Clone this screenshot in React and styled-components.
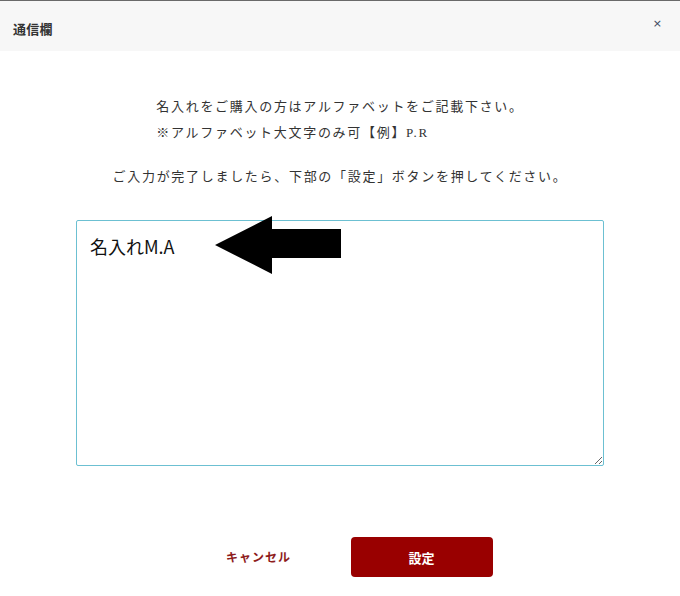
import React from 'react';
import styled, { createGlobalStyle } from 'styled-components';

const GlobalStyle = createGlobalStyle`
    html, body {
        margin: 0;
        padding: 0;
        background: #ffffff;
    }
    body {
        font-family: "Liberation Serif", "Noto Sans CJK JP", serif;
        color: #333;
    }
`;

const Modal = styled.div`
    width: 680px;
    height: 596px;
    display: flex;
    flex-direction: column;
    background: #fff;
`;

const Header = styled.div`
    height: 50px;
    border-top: 1px solid #6a6a6a;
    background: #f7f7f7;
    display: flex;
    align-items: center;
    justify-content: space-between;
    padding: 0 18px 0 13px;
`;

const Title = styled.h1`
    margin: 4px 0 0;
    font-size: 13px;
    font-weight: 700;
    color: #333;
    letter-spacing: 0.3px;
`;

const Close = styled.button`
    border: none;
    background: none;
    padding: 0;
    margin-top: -6px;
    font-family: "DejaVu Sans", sans-serif;
    font-size: 11px;
    color: #3a4660;
    cursor: pointer;
`;

const Body = styled.div`
    flex: 1;
    display: flex;
    flex-direction: column;
    align-items: center;
    padding-top: 43px;
`;

const Notice = styled.div`
    font-size: 13px;
    line-height: 26px;
    letter-spacing: 1.7px;
    color: #333;
    text-align: left;
`;

const Note = styled.p`
    margin: ${props => props.gap ? '18px 0 0' : '0'};
    font-size: 13px;
    line-height: 26px;
    letter-spacing: 1.7px;
    color: #333;
    text-align: center;
`;

const Field = styled.div`
    position: relative;
    width: 528px;
    height: 246px;
    margin-top: 30px;
`;

const TextArea = styled.textarea`
    box-sizing: border-box;
    width: 100%;
    height: 100%;
    border: 1px solid #6cc0d2;
    border-radius: 2px;
    padding: 12px 13px;
    font-family: "Noto Sans CJK JP", sans-serif;
    font-size: 18px;
    line-height: 26px;
    color: #111;
    resize: vertical;
    outline: none;
`;

const Arrow = styled.svg`
    position: absolute;
    left: 138px;
    top: -5px;
    width: 128px;
    height: 60px;
    pointer-events: none;
`;

const Actions = styled.div`
    display: flex;
    justify-content: center;
    gap: 21px;
    margin-top: 71px;
`;

const CancelButton = styled.button`
    width: 142px;
    height: 40px;
    border: none;
    background: none;
    font-family: "Liberation Serif", "Noto Sans CJK JP", serif;
    font-size: 12px;
    font-weight: 700;
    letter-spacing: 1px;
    color: #8e1c1c;
    cursor: pointer;
`;

const SubmitButton = styled.button`
    width: 142px;
    height: 40px;
    border: none;
    border-radius: 4px;
    background: #990000;
    font-family: "Liberation Serif", "Noto Sans CJK JP", serif;
    font-size: 13px;
    font-weight: 700;
    color: #fff;
    cursor: pointer;
`;

export default function App() {
    return (
        <>
            <GlobalStyle />
            <Modal>
                <Header>
                    <Title>通信欄</Title>
                    <Close>×</Close>
                </Header>
                <Body>
                    <Notice>
                        名入れをご購入の方はアルファベットをご記載下さい。<br />
                        ※アルファベット大文字のみ可【例】P.R
                    </Notice>
                    <Note gap>ご入力が完了しましたら、下部の「設定」ボタンを押してください。</Note>
                    <Field>
                        <TextArea readOnly defaultValue="名入れM.A" />
                        {/* arrow pointing at the text */}
                        <Arrow viewBox="0 0 128 60">
                            <polygon points="1,30 58,1 58,14 127,14 127,43 58,43 58,59" fill="#000" />
                        </Arrow>
                    </Field>
                    <Actions>
                        <CancelButton>キャンセル</CancelButton>
                        <SubmitButton>設定</SubmitButton>
                    </Actions>
                </Body>
            </Modal>
        </>
    );
}
